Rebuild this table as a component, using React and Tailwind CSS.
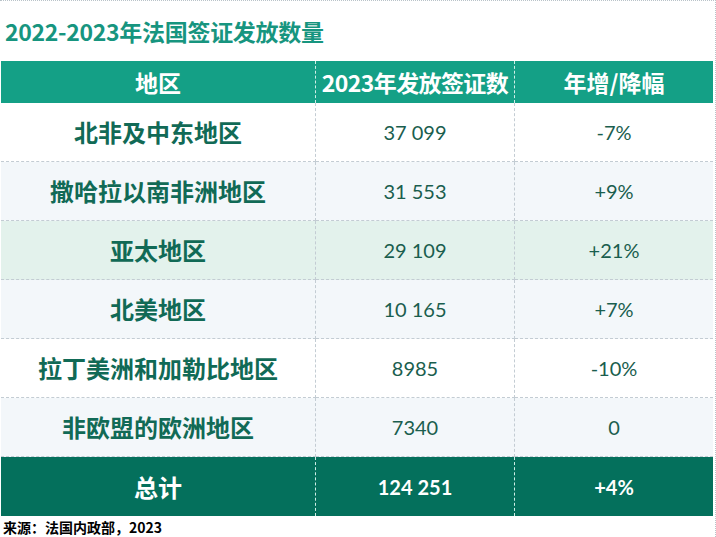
const rows = [
  { region: '北非及中东地区', count: '37 099', change: '-7%', bg: 'bg-white' },
  { region: '撒哈拉以南非洲地区', count: '31 553', change: '+9%', bg: 'bg-[#f3f7fa]' },
  { region: '亚太地区', count: '29 109', change: '+21%', bg: 'bg-[#e3f2ec]' },
  { region: '北美地区', count: '10 165', change: '+7%', bg: 'bg-[#f3f7fa]' },
  { region: '拉丁美洲和加勒比地区', count: '8985', change: '-10%', bg: 'bg-white' },
  { region: '非欧盟的欧洲地区', count: '7340', change: '0', bg: 'bg-[#f3f7fa]' },
];

const cjk = "font-['Noto_Sans_CJK_SC',sans-serif]";
const num = "font-['Lato','Noto_Sans_CJK_SC',sans-serif]";

function App() {
  return (
    <div className="w-[716px] h-[537px] bg-white border-t border-r border-dotted border-[#b9c3c9] overflow-hidden flex flex-col">
      <div className="h-[61px] flex items-center pl-[5px]">
        <h1 className={`${cjk} text-[23px] font-bold text-[#17957f] tracking-[-0.3px] leading-none`}>
          2022-2023年法国签证发放数量
        </h1>
      </div>

      <div className="ml-[1px] w-[712px] grid grid-cols-[315px_199px_198px]">
        <div className={`${cjk} h-[42px] bg-[#14a086] text-white font-bold text-[23px] flex items-center justify-center border-r border-dashed border-[#cfeee7]`}>
          地区
        </div>
        <div className={`${cjk} h-[42px] bg-[#14a086] text-white font-bold text-[23px] flex items-center justify-center border-r border-dashed border-[#cfeee7] tracking-[-0.6px]`}>
          2023年发放签证数
        </div>
        <div className={`${cjk} h-[42px] bg-[#14a086] text-white font-bold text-[23px] flex items-center justify-center`}>
          年增/降幅
        </div>

        {rows.map((r) => (
          <div key={r.region} className="contents">
            <div className={`${cjk} ${r.bg} h-[59px] flex items-center justify-center text-[24px] font-bold text-[#116a56] border-r border-b border-dashed border-[#c3ccd3]`}>
              {r.region}
            </div>
            <div className={`${num} ${r.bg} h-[59px] flex items-center justify-center text-[20px] text-[#1a5e4e] border-r border-b border-dashed border-[#c3ccd3]`}>
              {r.count}
            </div>
            <div className={`${num} ${r.bg} h-[59px] flex items-center justify-center text-[20px] text-[#1a5e4e] border-b border-dashed border-[#c3ccd3]`}>
              {r.change}
            </div>
          </div>
        ))}

        <div className={`${cjk} h-[59px] bg-[#04705c] text-white font-bold text-[24px] flex items-center justify-center border-r border-dashed border-[#cfeee7]`}>
          总计
        </div>
        <div className={`${num} h-[59px] bg-[#04705c] text-white font-bold text-[20px] flex items-center justify-center border-r border-dashed border-[#cfeee7]`}>
          124 251
        </div>
        <div className={`${num} h-[59px] bg-[#04705c] text-white font-bold text-[20px] flex items-center justify-center`}>
          +4%
        </div>
      </div>

      <div className={`${cjk} pl-[3px] pt-[1px] text-[14px] font-bold text-black leading-[20px]`}>
        来源：法国内政部，2023
      </div>
    </div>
  );
}

export default App;
